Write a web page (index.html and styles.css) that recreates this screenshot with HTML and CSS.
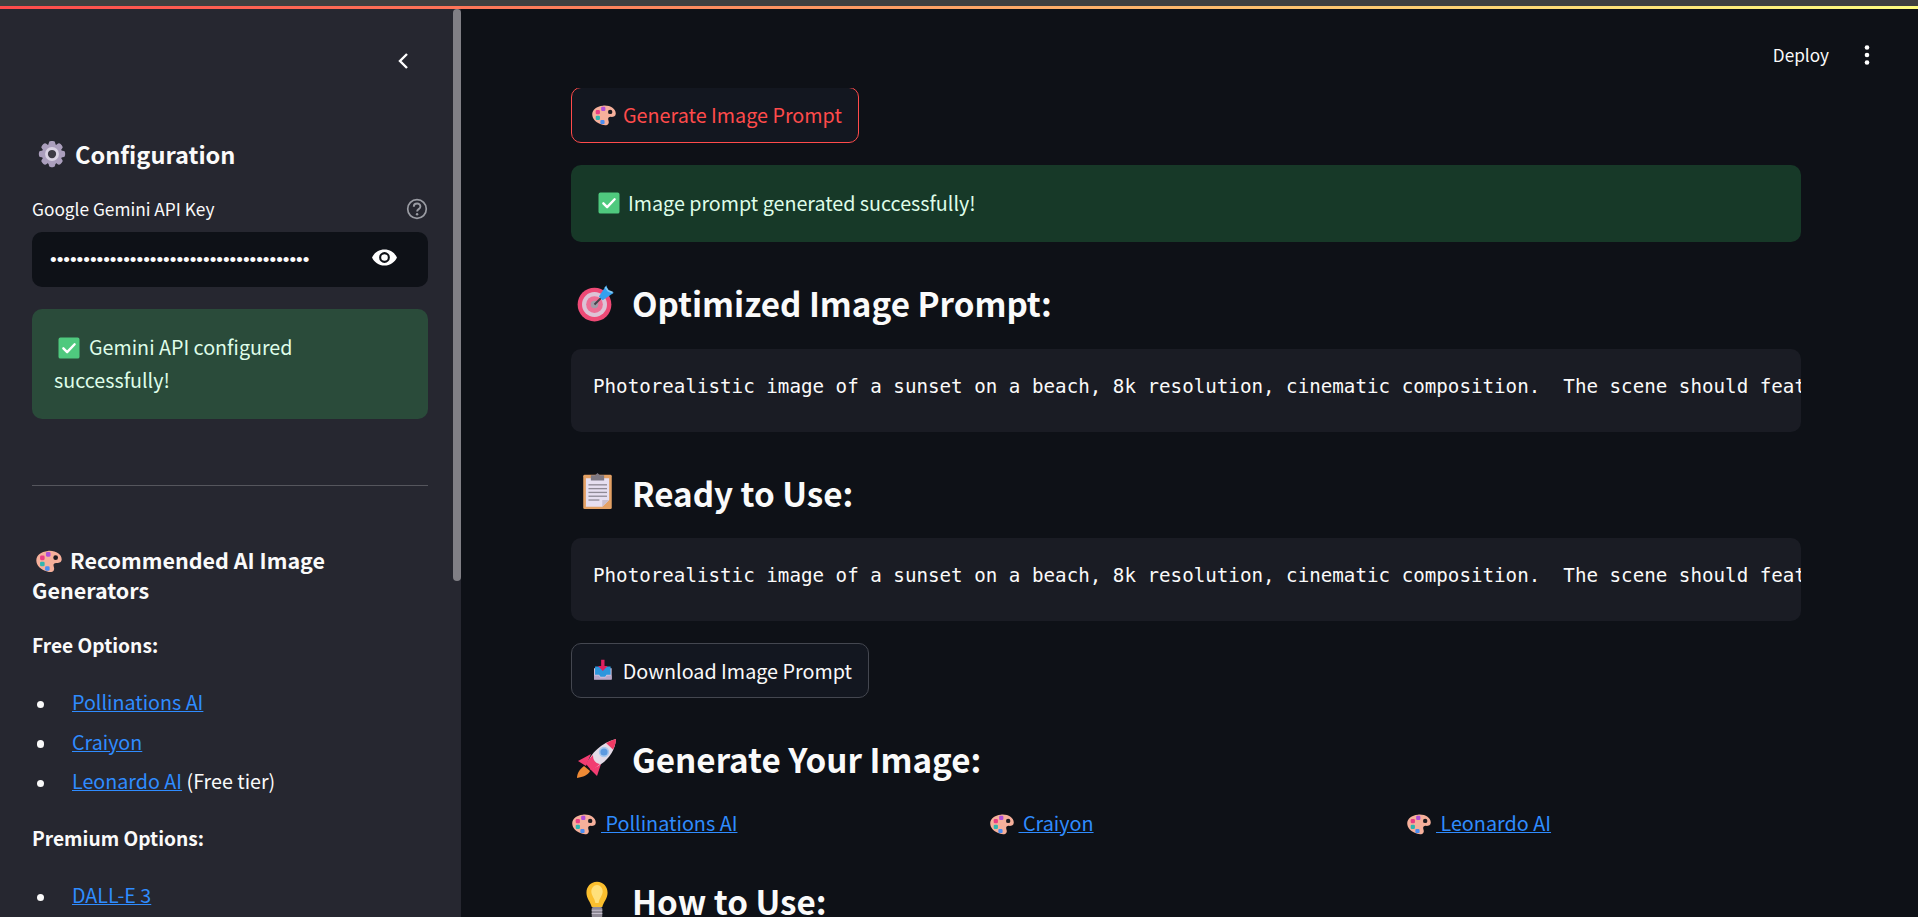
FILE: index.html
```html
<!DOCTYPE html>
<html lang="en">
<head>
<meta charset="utf-8">
<title>Image Prompt Generator</title>
<link rel="stylesheet" href="styles.css">
</head>
<body>
<svg class="sprite" aria-hidden="true">
  <defs>
    <symbol id="i-gear" viewBox="0 0 32 32">
      <g fill="#ab9fbd">
        <rect x="12.5" y="2" width="7" height="28" rx="2.5"/>
        <rect x="12.5" y="2" width="7" height="28" rx="2.5" transform="rotate(45 16 16)"/>
        <rect x="12.5" y="2" width="7" height="28" rx="2.5" transform="rotate(90 16 16)"/>
        <rect x="12.5" y="2" width="7" height="28" rx="2.5" transform="rotate(135 16 16)"/>
        <circle cx="16" cy="16" r="11"/>
      </g>
      <circle cx="16" cy="16" r="7.4" fill="#d9d2e3"/>
      <circle cx="16" cy="16" r="4.4" fill="#3c3a44"/>
    </symbol>
    <symbol id="i-check" viewBox="0 0 32 32">
      <rect x="2" y="2" width="28" height="28" rx="2.5" fill="#4fc97e"/>
      <path d="M8.5 16.5l5 5L23.5 11" fill="none" stroke="#fff" stroke-width="3.2" stroke-linecap="round" stroke-linejoin="round"/>
    </symbol>
    <symbol id="i-palette" viewBox="0 0 32 32">
      <path d="M14.5 4.5C23 3.500 30.500 8 30.500 14c0 3.600-3.200 4.500-6 4.300-2.300-.1-3.700 1-3.300 3.200.4 2.200 1.300 3.300.2 5.300-1.300 2.300-4.700 2.200-7.400 1.300C6.500 25.700 1.500 21 1.500 15 1.500 9.500 7 5.300 14.500 4.500z" fill="#f6b09b"/>
      <circle cx="23.600" cy="12.200" r="2.700" fill="#1c1a20"/>
      <rect x="12.500" y="5.800" width="5.200" height="5.200" rx="1.500" fill="#b04fd8"/>
      <rect x="5.800" y="9.800" width="5.200" height="5.200" rx="1.500" fill="#ea3d83"/>
      <rect x="5.800" y="16.800" width="5.200" height="5.200" rx="1.500" fill="#2fb5b0"/>
      <rect x="11.500" y="22" width="5.200" height="5.200" rx="1.500" fill="#4a8df0"/>
    </symbol>
    <symbol id="i-target" viewBox="0 0 32 32">
      <circle cx="14" cy="18" r="13.500" fill="#ee4a76"/>
      <circle cx="14" cy="18" r="10" fill="#ddc3d6"/>
      <circle cx="14" cy="18" r="6.700" fill="#ee6f96"/>
      <circle cx="14" cy="18" r="3" fill="#a39ba8"/>
      <path d="M14 18L25 7" stroke="#454049" stroke-width="1.600"/>
      <path d="M17.500 11.500L23.500 2.500 25 7 29.500 8.500 20.500 14.500z" fill="#35a0ee"/>
      <path d="M22.500 4l2.500 3 3.500 1.500" fill="none" stroke="#7fcaf7" stroke-width="1.400"/>
    </symbol>
    <symbol id="i-clipboard" viewBox="0 0 32 40">
      <rect x="1" y="3" width="30" height="36" rx="1.500" fill="#e3a165"/>
      <path d="M3.800 6.500H28.200V29.500L21 36.500H3.800z" fill="#e6dff0"/>
      <path d="M21 36.500V29.500H28.200z" fill="#c8bfd0"/>
      <path d="M9 3.500h4.500L16 1l2.500 2.500H23v5.500H9z" fill="#7d7883"/>
      <g stroke="#8f8a96" stroke-width="1.400">
        <path d="M6.500 13.500H26"/><path d="M6.500 17.500H26"/><path d="M6.500 21.500H26"/><path d="M6.500 25.500H26"/><path d="M6.500 29.500H18"/>
      </g>
    </symbol>
    <symbol id="i-inbox" viewBox="0 0 32 32">
      <path d="M3 13.500h26V30H3z" fill="#d5c6e0"/>
      <path d="M3 24h7l2 3h8l2-3h7v6H3z" fill="#b7a6c8"/>
      <path d="M4.500 11h23v12h-6l-2 3h-7l-2-3h-6z" fill="#2d96dc"/>
      <path d="M13.500 1h5v9h4.500l-7 7.500-7-7.500h4.500z" fill="#e0205f"/>
    </symbol>
    <symbol id="i-rocket" viewBox="0 0 40 40">
      <path d="M14 16L1 23l8 5z" fill="#f23d72"/>
      <path d="M24 26l-4 12-7-7z" fill="#f23d72"/>
      <path d="M10 26C14 15 24 5 39 1 38 15 28 26 15 31z" fill="#e4dbe7"/>
      <path d="M29 5C32 3.500 36 2 39 1 39 4 38 8 36 11.500z" fill="#f03a63"/>
      <path d="M9 26C11 22 14 19 16 17 16 22 18 25 23 26 20 29 17 31 14 32z" fill="#f23d72"/>
      <circle cx="27" cy="14" r="4.400" fill="#5d9ae0" stroke="#a8c8ee" stroke-width="1.600"/>
      <path d="M7 28l6 5C11 37 6 39 0 40 0 35 3 31 7 28z" fill="#ee8a35"/>
    </symbol>
    <symbol id="i-bulb" viewBox="0 0 32 48">
      <path d="M16 1C8 1 3 7.500 3 14.500c0 7 5 11.500 6.500 17.500h13C24 26 29 21.500 29 14.500 29 7.500 24 1 16 1z" fill="#fbbf2e"/>
      <path d="M16 5c-4 0-7 4-7 8 0 5 4 8 5 14h4c1-6 5-9 5-14 0-4-3-8-7-8z" fill="#ffe07a"/>
      <rect x="9.500" y="32" width="13" height="13" rx="2" fill="#8f8a96"/>
      <path d="M9.500 36h13M9.500 40h13" stroke="#c5bfcc" stroke-width="1.500"/>
    </symbol>
  </defs>
</svg>

<div class="chrome-line"></div>
<div class="gradient-line"></div>

<div class="app">
  <aside class="sidebar">
    <div class="scrollbar-thumb"></div>
    <div class="collapse-row">
      <svg class="chevron" viewBox="0 0 12 18"><path d="M10 2L3 9l7 7" fill="none" stroke="#fff" stroke-width="2.400"/></svg>
    </div>
    <h2 class="side-title"><svg class="emoji e-gear"><use href="#i-gear"/></svg>Configuration</h2>
    <div class="label-row">
      <span>Google Gemini API Key</span>
      <svg class="help" viewBox="0 0 22 22"><circle cx="11" cy="11" r="9.300" fill="none" stroke="#9a9ca3" stroke-width="1.700"/><path d="M7.800 8.700c0-4.200 6.600-4.200 6.600-.2 0 2.700-3.300 2.500-3.300 5" fill="none" stroke="#9a9ca3" stroke-width="1.900"/><circle cx="11.100" cy="16.200" r="1.200" fill="#9a9ca3"/></svg>
    </div>
    <div class="key-input">
      <span class="dots">•••••••••••••••••••••••••••••••••••••••</span>
      <svg class="eye" viewBox="0 0 28 18"><path fill-rule="evenodd" d="M14 .5C8 .5 3 4 .8 9 3 14 8 17.500 14 17.500S25 14 27.200 9C25 4 20 .5 14 .5zm0 14.200a5.700 5.700 0 1 1 0-11.400 5.700 5.700 0 0 1 0 11.400zM14 5.500a3.500 3.500 0 1 0 0 7 3.500 3.500 0 0 0 0-7z" fill="#fff"/></svg>
    </div>
    <div class="side-alert">
      <p><svg class="emoji e-check-side"><use href="#i-check"/></svg>Gemini API configured<br>successfully!</p>
    </div>
    <hr class="rule">
    <h3 class="side-sub"><svg class="emoji e-palette-side"><use href="#i-palette"/></svg>Recommended AI Image<br>Generators</h3>
    <p class="side-strong">Free Options:</p>
    <ul class="side-list">
      <li><a href="#">Pollinations AI</a></li>
      <li><a href="#">Craiyon</a></li>
      <li><a href="#">Leonardo AI</a> (Free tier)</li>
    </ul>
    <p class="side-strong premium">Premium Options:</p>
    <ul class="side-list">
      <li><a href="#">DALL-E 3</a></li>
    </ul>
  </aside>

  <main class="main">
    <header class="toolbar">
      <span class="deploy">Deploy</span>
      <svg class="kebab" viewBox="0 0 6 22"><circle cx="3" cy="3.500" r="2.300" fill="#fff"/><circle cx="3" cy="11" r="2.300" fill="#fff"/><circle cx="3" cy="18.500" r="2.300" fill="#fff"/></svg>
    </header>
    <div class="content">
      <div class="clip-top">
        <button class="btn btn-active"><svg class="emoji e-btn"><use href="#i-palette"/></svg>Generate Image Prompt</button>
      </div>
      <div class="success"><svg class="emoji e-check"><use href="#i-check"/></svg>Image prompt generated successfully!</div>
      <h2 class="heading h-first"><span class="h-icon"><svg class="emoji e-target"><use href="#i-target"/></svg></span>Optimized Image Prompt:</h2>
      <pre class="code">Photorealistic image of a sunset on a beach, 8k resolution, cinematic composition.  The scene should feature a vibrant sky</pre>
      <h2 class="heading h-second"><span class="h-icon"><svg class="emoji e-clip"><use href="#i-clipboard"/></svg></span>Ready to Use:</h2>
      <pre class="code code-second">Photorealistic image of a sunset on a beach, 8k resolution, cinematic composition.  The scene should feature a vibrant sky</pre>
      <button class="btn btn-download"><svg class="emoji e-btn-dl"><use href="#i-inbox"/></svg>Download Image Prompt</button>
      <h2 class="heading h-third"><span class="h-icon"><svg class="emoji e-rocket"><use href="#i-rocket"/></svg></span>Generate Your Image:</h2>
      <div class="links">
        <a href="#"><svg class="emoji e-link"><use href="#i-palette"/></svg>&nbsp;Pollinations AI</a>
        <a href="#"><svg class="emoji e-link"><use href="#i-palette"/></svg>&nbsp;Craiyon</a>
        <a href="#"><svg class="emoji e-link"><use href="#i-palette"/></svg>&nbsp;Leonardo AI</a>
      </div>
      <h2 class="heading h-fourth"><span class="h-icon"><svg class="emoji e-bulb"><use href="#i-bulb"/></svg></span>How to Use:</h2>
    </div>
  </main>
</div>
</body>
</html>
```

FILE: styles.css
```css
* { box-sizing: border-box; }

html, body {
  margin: 0;
  height: 917px;
  overflow: hidden;
  background: #0e1117;
  color: #fafafa;
  font-family: "Noto Sans CJK SC", "Noto Sans", sans-serif;
}

.sprite { display: block; width: 0; height: 0; }

.chrome-line { height: 6px; background: #404040; }
.gradient-line { height: 3px; background: linear-gradient(90deg, #ff4b4b, #fffd80); }

.app { display: flex; height: 908px; overflow: hidden; }

a { color: #2f8cff; text-decoration: underline; }

.emoji { display: inline-block; vertical-align: middle; }

/* Sidebar */
.sidebar {
  position: relative;
  flex: 0 0 461px;
  width: 461px;
  height: 100%;
  overflow: hidden;
  background: #262730;
  padding: 0 33px 0 32px;
}
.scrollbar-thumb {
  position: absolute;
  top: 0;
  right: 0;
  width: 8px;
  height: 572px;
  background: #807f85;
  border-radius: 4px;
}
.collapse-row { display: flex; justify-content: flex-end; height: 61px; padding: 43px 19px 0 0; }
.chevron { width: 12px; height: 18px; flex: none; }

.side-title {
  margin: 64px 0 0;
  font-size: 23.600px;
  line-height: 40px;
  font-weight: 600;
  padding-left: 5px;
  display: flex;
  align-items: center;
}
.e-gear { width: 30px; height: 30px; margin-right: 8px; }

.label-row {
  margin-top: 23px;
  display: flex;
  justify-content: space-between;
  align-items: center;
  font-size: 17.300px;
  line-height: 24px;
}
.help { width: 22px; height: 22px; }

.key-input {
  margin-top: 11px;
  height: 55px;
  background: #0e1117;
  border-radius: 10px;
  display: flex;
  align-items: center;
  justify-content: space-between;
  padding: 0 30px 0 18px;
}
.dots { font-size: 19px; color: #fafafa; font-family: "Liberation Sans", sans-serif; line-height: 24px; white-space: nowrap; overflow: hidden; width: 262px; }
.eye { width: 27px; height: 17px; flex: none; margin-top: -4px; }

.side-alert {
  margin-top: 22px;
  height: 110px;
  background: #2a4b3a;
  border-radius: 10px;
  padding: 21px 22px 0;
  color: #dffde9;
  font-size: 19.700px;
  line-height: 33px;
}
.side-alert p { margin: 0; }
.e-check-side { width: 24px; height: 24px; margin: -4px 8px 0 3px; }

.rule { margin: 66px 0 0; border: 0; border-top: 1px solid #55565d; }

.side-sub {
  margin: 59px 0 0;
  font-size: 21.500px;
  line-height: 30px;
  font-weight: 600;
}
.e-palette-side { width: 28px; height: 28px; margin: -4px 7px 0 3px; }

.side-strong { margin: 24px 0 0; font-size: 19.200px; line-height: 32px; font-weight: 600; }
.side-strong.premium { margin-top: 26px; }

.side-list { margin: 26px 0 0; padding: 0; list-style: none; font-size: 19.700px; line-height: 30px; }
.side-list li { margin-bottom: 9.500px; }
.side-list li::before {
  content: "";
  display: inline-block;
  width: 7.300px;
  height: 7.300px;
  margin: 0 28px 0 4.700px;
  border-radius: 50%;
  background: #fafafa;
  vertical-align: 2px;
}

/* Main */
.main { flex: 1; min-width: 0; }

.toolbar {
  display: flex;
  justify-content: flex-end;
  align-items: center;
  height: 79px;
  padding: 13px 48px 0 0;
}
.deploy { font-size: 17.200px; line-height: 24px; margin-right: 35px; }
.kebab { width: 6px; height: 22px; }

.content { width: 1230px; margin-left: 110px; }

.clip-top { height: 55px; overflow: hidden; }

.btn {
  display: flex;
  align-items: center;
  height: 55px;
  background: #131720;
  border: 1px solid #444750;
  border-radius: 10px;
  font: inherit;
  font-size: 19.750px;
  line-height: 28px;
  color: #fafafa;
  white-space: nowrap;
  padding: 0 16px;
}
.btn-active { margin-top: -1px; width: 288px; height: 56px; border-color: #ff4b4b; color: #ff4b4b; padding-left: 19px; }
.e-btn { width: 26px; height: 26px; margin-right: 6px; }
.btn-download { width: 298px; margin-top: 22px; height: 55px; padding-left: 20px; }
.e-btn-dl { width: 23px; height: 24px; margin-right: 9px; margin-top: -2px; }

.success {
  margin-top: 22px;
  height: 77px;
  background: #173928;
  border-radius: 10px;
  display: flex;
  align-items: center;
  padding: 0 26px 2px;
  color: #dffde9;
  font-size: 19.700px;
  line-height: 28px;
}
.e-check { width: 24px; height: 24px; margin-right: 7px; }

.heading {
  margin: 0;
  display: flex;
  align-items: center;
  font-size: 33.200px;
  line-height: 48px;
  font-weight: 600;
  color: #fafafa;
}
.h-first { margin-top: 37px; }
.h-second { margin-top: 36.500px; }
.h-third { margin-top: 36.500px; }
.h-fourth { margin-top: 40px; }
.h-icon { flex: 0 0 61px; display: flex; align-items: center; height: 48px; }

.e-target { width: 40px; height: 40px; margin-left: 6px; margin-top: -2px; }
.e-clip { width: 31px; height: 38px; margin-left: 11px; margin-top: -3px; }
.e-rocket { width: 40px; height: 40px; margin-left: 6px; margin-top: -2px; }
.e-bulb { width: 26px; height: 39px; margin-left: 13px; margin-top: 0; }

.code {
  margin: 22px 0 0;
  height: 83px;
  background: #1a1c24;
  border-radius: 10px;
  padding: 24px 0 0 22px;
  overflow: hidden;
  white-space: pre;
  font-family: "DejaVu Sans Mono", "Liberation Mono", monospace;
  font-size: 19.200px;
  line-height: 28px;
  color: #fafafa;
}
.code-second { margin-top: 21.500px; }

.links {
  display: grid;
  grid-template-columns: repeat(3, 417.500px);
  margin-top: 26px;
  font-size: 19.800px;
  line-height: 28px;
}
.links a { justify-self: start; white-space: nowrap; }
.e-link { width: 26px; height: 26px; margin-top: -3px; margin-right: 4px; }
```
